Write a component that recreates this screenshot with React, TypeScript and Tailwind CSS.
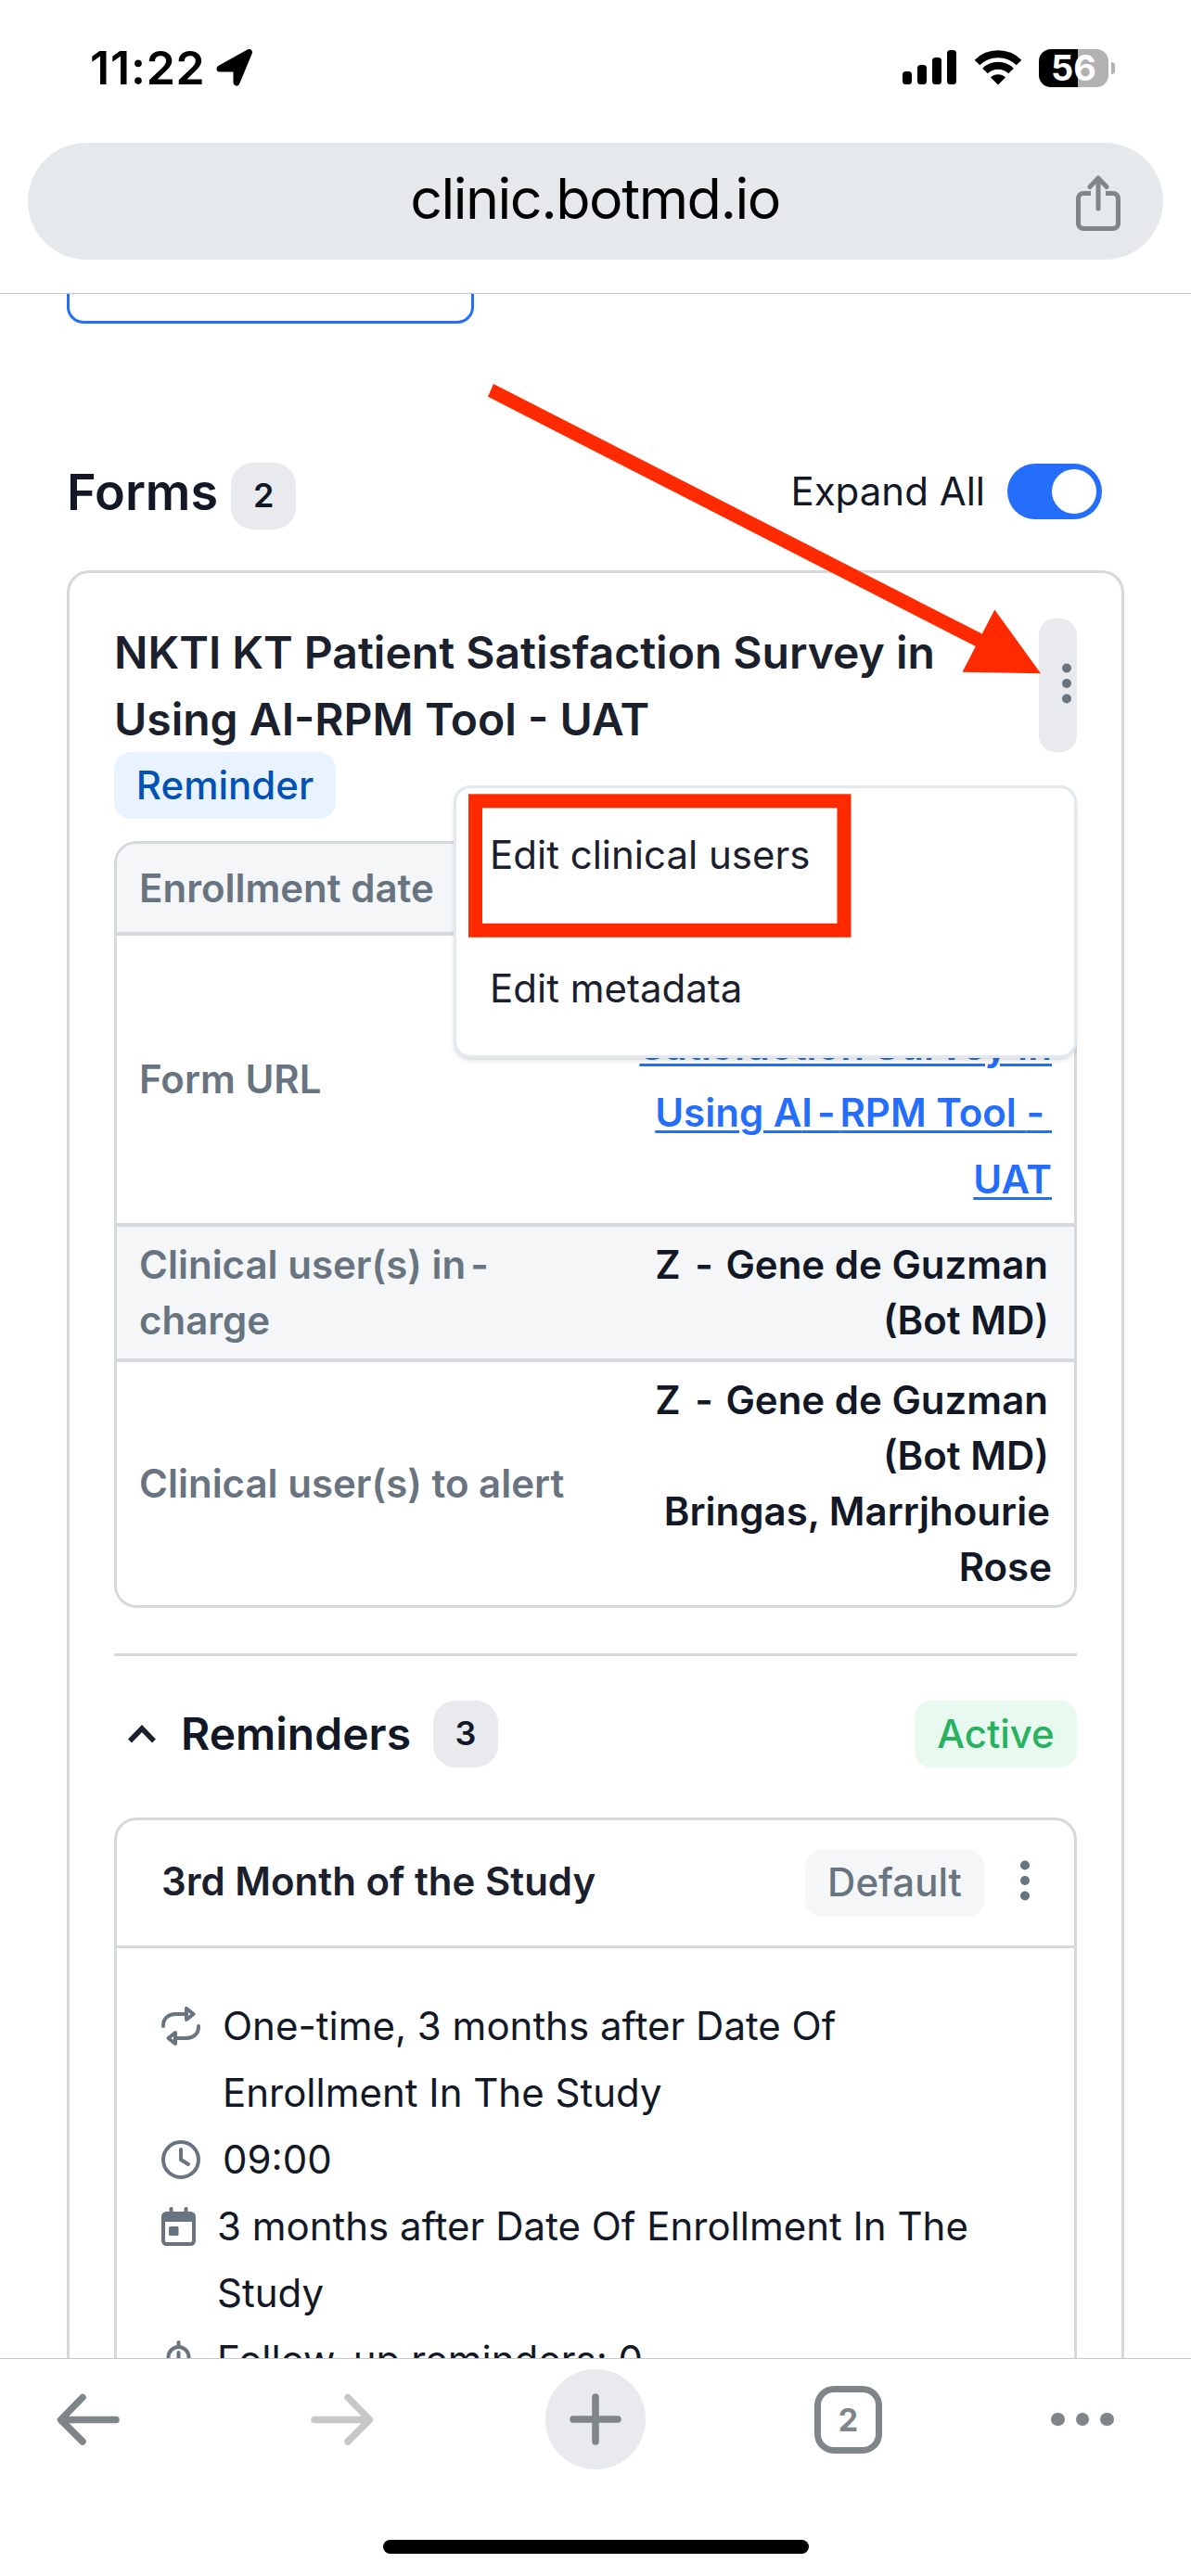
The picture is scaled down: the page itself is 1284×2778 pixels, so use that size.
import type { ReactNode } from "react";

interface DetailRow {
  id: string;
  label: ReactNode;
  value: ReactNode;
  rowClass: string;
}

const GuzmanName = () => (
  <>
    <span className="block pr-1">
      Z <span className="mr-[3px] ml-[5px]">-</span> Gene de Guzman
    </span>
    <span className="block pr-[3px]">(Bot MD)</span>
  </>
);

const detailRows: DetailRow[] = [
  { id: "enrollment", label: "Enrollment date", value: "", rowClass: "h-[95px] bg-[#f4f6f8]" },
  {
    id: "url",
    label: "Form URL",
    value: (
      <a className="block leading-[72px] text-[#256dfb] underline decoration-[3px] underline-offset-[4px]">
        <span className="block">NKTI KT Patient</span>
        <span className="block tracking-[0.1px]">Satisfaction Survey in</span>
        {/* hyphens in the link are set a little wider */}
        <span className="block">
          Using A<span className="tracking-[5px]">I-</span>RPM Tool <span className="tracking-[8px]">-</span>
        </span>
        <span className="block">UAT</span>
      </a>
    ),
    rowClass: "h-[314px] border-t-4",
  },
  {
    id: "charge",
    label: (
      <>
        Clinical user(s) in<span className="ml-[5px]">-</span>
        <br />
        charge
      </>
    ),
    value: <GuzmanName />,
    rowClass: "h-[146px] border-t-4 bg-[#f4f6f8]",
  },
  {
    id: "alert",
    label: "Clinical user(s) to alert",
    value: (
      <>
        <GuzmanName />
        <span className="block pr-0.5">Bringas, Marrjhourie</span>
        <span className="block">Rose</span>
      </>
    ),
    rowClass: "h-[266px] border-t-4",
  },
];

const Kebab = () => (
  <svg width="12" height="44" viewBox="0 0 12 44" fill="#687480">
    <circle cx="6" cy="5.5" r="5" />
    <circle cx="6" cy="22" r="5" />
    <circle cx="6" cy="38.5" r="5" />
  </svg>
);

const CountBadge = ({ children }: { children: ReactNode }) => (
  <span className="flex h-[72px] w-[70px] items-center justify-center rounded-3xl bg-[#e8eaed] pb-0.5 text-[36px] font-semibold">
    {children}
  </span>
);

const RepeatIcon = () => (
  <svg width="42" height="42" viewBox="0 0 42 42" fill="none" stroke="#687480" strokeWidth="4" strokeLinecap="round" strokeLinejoin="round">
    <path d="M2 21v-1C2 13 7.500 8 15 8h12" />
    <path d="M27 2v12l7.500-6z" />
    <path d="M40 21v1c0 7-5.500 12-13 12H15" />
    <path d="M15 28v12l-7.500-6z" />
  </svg>
);

const ClockIcon = () => (
  <svg width="42" height="42" viewBox="0 0 42 42" fill="none" stroke="#687480" strokeWidth="4" strokeLinecap="round" strokeLinejoin="round">
    <circle cx="21" cy="21" r="19" />
    <path d="M21 10v11l8 5" />
  </svg>
);

const CalendarIcon = () => (
  <svg width="37" height="42" viewBox="0 0 37 42" fill="none">
    <path d="M10.500 2v6M26.500 2v6" stroke="#687480" strokeWidth="4" strokeLinecap="round" />
    <rect x="2" y="7" width="33" height="33" rx="3.500" stroke="#687480" strokeWidth="4" />
    <path d="M2 7h33v9H2z" fill="#687480" />
    <rect x="8" y="21" width="10.500" height="10" rx="1.500" fill="#687480" />
  </svg>
);

const TimerIcon = () => (
  <svg width="37" height="42" viewBox="0 0 37 42" fill="none" stroke="#687480" strokeWidth="4" strokeLinecap="round">
    <path d="M18.500 2v3M18.500 13v9" />
    <path d="M7.500 18a11 11 0 0 1 22 0v10h-22z" />
  </svg>
);

const scheduleItems = [
  { id: "repeat", icon: <RepeatIcon />, gap: "gap-6", lines: ["One-time, 3 months after Date Of", "Enrollment In The Study"] },
  { id: "time", icon: <ClockIcon />, gap: "gap-6", lines: ["09:00"] },
  { id: "date", icon: <CalendarIcon />, gap: "gap-[23px]", lines: ["3 months after Date Of Enrollment In The", "Study"] },
  { id: "followup", icon: <TimerIcon />, gap: "gap-[23px]", lines: ["Follow-up reminders: 0"] },
];

const StatusBar = () => (
  <div className="flex h-[146px] shrink-0 items-center justify-between pr-[82px] pl-[97px] text-black">
    <div className="flex items-center gap-[11px]">
      <span className="text-[50px] leading-none font-semibold tracking-[0.8px]">11:22</span>
      <svg width="40" height="40" viewBox="0 0 40 40">
        <path d="M35.500 3.500 22 36V21H4z" fill="black" stroke="black" strokeWidth="7" strokeLinejoin="round" />
      </svg>
    </div>
    <div className="flex items-center">
      <svg width="58" height="38" viewBox="0 0 58 38">
        <rect x="0" y="23" width="10" height="14" rx="3.500" />
        <rect x="16" y="16" width="10" height="21" rx="3.500" />
        <rect x="32" y="8" width="10" height="29" rx="3.500" />
        <rect x="48" y="0" width="10" height="37" rx="3.500" />
      </svg>
      <svg className="ml-[19px]" width="52" height="38" viewBox="0 0 52 38">
        <path d="M3.500 13.500a32 32 0 0 1 45 0" fill="none" stroke="black" strokeWidth="8" />
        <path d="M12 22.500a20 20 0 0 1 28 0" fill="none" stroke="black" strokeWidth="8" />
        <path d="M18 29.500a11.500 11.500 0 0 1 16 0L26 37.500z" />
      </svg>
      <div className="ml-[18px] flex items-center gap-[3px]">
        <div className="flex h-[41px] w-[75px] items-center justify-center rounded-[13px] bg-linear-to-r from-black from-56% to-[#b2b2b2] to-56% text-[38px] leading-none font-bold text-white">
          56
        </div>
        <div className="h-[13px] w-1 rounded-r-full bg-[#b2b2b2]" />
      </div>
    </div>
  </div>
);

const ActionMenu = () => (
  <div className="absolute top-[180px] right-0 z-10 flex h-[294px] w-[672px] flex-col rounded-[18px] border-3 border-[#e2e8f0] bg-white pl-9 text-[42px] text-[#1a202c] shadow-md">
    {["Edit clinical users", "Edit metadata"].map((item) => (
      <button key={item} className="h-36 pb-0.5 text-left">
        {item}
      </button>
    ))}
  </div>
);

const BrowserBar = () => (
  <div className="h-[235px] shrink-0 border-t border-[#c8c8c8] bg-white">
    <div className="mt-[11px] flex h-[108px] items-center">
      <svg className="ml-[61px]" width="68" height="56" viewBox="0 0 68 56" fill="none" stroke="#7f868a" strokeWidth="7.500" strokeLinecap="round" strokeLinejoin="round">
        <path d="M64 28.500H5M28 4.500 4.500 28.500 28 52" />
      </svg>
      <svg className="ml-[206px]" width="68" height="56" viewBox="0 0 68 56" fill="none" stroke="#c7c7c7" strokeWidth="7.500" strokeLinecap="round" strokeLinejoin="round">
        <path d="M4 28.500h59M40 4.500l23.500 24L40 52" />
      </svg>
      <div className="ml-[185px] flex size-[108px] items-center justify-center rounded-full bg-[#e8eaed]">
        <svg width="56" height="56" viewBox="0 0 56 56" stroke="#7f868a" strokeWidth="7.500" strokeLinecap="round">
          <path d="M4 28h48M28 4v48" />
        </svg>
      </div>
      <div className="ml-[182px] flex size-[73px] items-center justify-center rounded-[21px] border-7 border-[#7f868a] text-[34px] font-bold text-[#7f868a]">
        2
      </div>
      <div className="ml-[182px] flex gap-3">
        <span className="size-[14.5px] rounded-full bg-[#7f868a]" />
        <span className="size-[14.5px] rounded-full bg-[#7f868a]" />
        <span className="size-[14.5px] rounded-full bg-[#7f868a]" />
      </div>
    </div>
    <div className="mx-auto mt-[76px] h-[15px] w-[459px] rounded-full bg-black" />
  </div>
);

// Red marker drawn over the page: arrow to the kebab and frame round the menu item
const Markup = () => (
  <svg className="pointer-events-none absolute inset-0 z-20" width="1284" height="2778" viewBox="0 0 1284 2778">
    <path d="M532 414 1058.800 683.600 1072.300 657.400 1122 726.200 1037.500 724.800 1051.800 697 526 427.700z" fill="#ff2a00" />
    <rect x="512.500" y="863.800" width="397.500" height="139.500" fill="none" stroke="#ff2a00" strokeWidth="15" />
  </svg>
);

const App = () => {
  return (
    <div className="relative flex h-[2778px] w-[1284px] flex-col overflow-hidden bg-white font-['Inter',sans-serif] text-[#121826]">
      <StatusBar />
      <div className="h-[171px] shrink-0 border-b border-[#c8c8c8] px-[30px] pt-2">
        <div className="flex h-[126px] items-center rounded-full bg-[#e6e9ec] pr-[45px]">
          <span className="ml-[94px] flex-1 pb-[6px] text-center text-[61px] leading-none tracking-[-1.5px] text-black">clinic.botmd.io</span>
          <svg className="mt-[4px]" width="50" height="60" viewBox="0 0 50 60" fill="none" stroke="#7f868a" strokeWidth="5" strokeLinecap="round" strokeLinejoin="round">
            <path d="M17 19.500H9a5.500 5.500 0 0 0-5.500 5.500v27A5.500 5.500 0 0 0 9 57.500h32a5.500 5.500 0 0 0 5.500-5.500V25a5.500 5.500 0 0 0-5.500-5.500h-8" strokeLinecap="butt" />
            <path d="M25 4v32M16 12.500 25 3l9 9.500" />
          </svg>
        </div>
      </div>

      <main className="min-h-0 flex-1 overflow-hidden px-[72px]">
        <div className="h-8 w-[439px] rounded-b-[18px] border-3 border-t-0 border-[#256dfb]" />

        <div className="mt-[145px] flex h-[72px] items-center justify-between pr-6">
          <div className="flex items-center">
            <h1 className="pt-0.5 text-[54px] leading-none font-semibold">Forms</h1>
            <div className="mt-2.5 ml-3.5">
              <CountBadge>2</CountBadge>
            </div>
          </div>
          <div className="flex items-center gap-6">
            <span className="pb-0.5 text-[42px]">Expand All</span>
            <div className="flex h-[60px] w-[102px] items-center justify-end rounded-full bg-[#256dfb] pr-1.5">
              <div className="size-12 rounded-full bg-white" />
            </div>
          </div>
        </div>

        {/* Form card */}
        <section className="mt-[49px] h-[2100px] rounded-3xl border-3 border-[#d5d9de] px-12 pt-[49px]">
          <div className="relative flex h-36 justify-between">
            <h2 className="pt-px text-[48px] leading-[72px] font-semibold whitespace-nowrap text-[#1a202c]">
              NKTI KT Patient Satisfaction Survey in
              <br />
              Using AI-RPM Tool - UAT
            </h2>
            <button className="flex w-[41px] items-center justify-end rounded-[18px] bg-[#e8eaed] pr-[5px] pb-1">
              <Kebab />
            </button>
            <ActionMenu />
          </div>
          <span className="flex h-[72px] w-[239px] items-center justify-center rounded-[18px] bg-[#e9f3ff] pb-0.5 text-[42px] font-medium text-[#0052b4]">
            Reminder
          </span>

          <div className="mt-6 overflow-hidden rounded-3xl border-3 border-[#d5d9de] text-[42px] leading-[60px] font-semibold">
            {detailRows.map((row) => (
              <div key={row.id} className={`flex items-center justify-between border-[#d5d9de] px-6 whitespace-nowrap ${row.rowClass}`}>
                <div className="text-[#687480]">{row.label}</div>
                <div className="text-right">{row.value}</div>
              </div>
            ))}
          </div>

          <hr className="mt-[49px] border-t-3 border-[#d5d9de]" />

          {/* Reminders */}
          <div className="mt-12 flex h-[72px] items-center">
            <svg className="ml-[14px]" width="32" height="22" viewBox="0 0 32 22" fill="none" stroke="#1a202c" strokeWidth="5.500">
              <path d="M3 18.500 16 5l13 13.500" />
            </svg>
            <h3 className="ml-[26px] text-[48px] leading-none font-semibold">Reminders</h3>
            <div className="ml-6">
              <CountBadge>3</CountBadge>
            </div>
            <span className="ml-auto flex h-[72px] w-[175px] items-center justify-center rounded-[18px] bg-[#e8f9f0] pb-0.5 text-[42px] font-medium text-[#28b15f]">
              Active
            </span>
          </div>

          <div className="mt-[54px] h-[700px] rounded-3xl border-3 border-[#d5d9de]">
            <div className="flex h-[138px] items-center border-b-3 border-[#d5d9de] pr-[47px] pb-1 pl-12">
              <h4 className="text-[42px] font-semibold text-[#1a202c]">3rd Month of the Study</h4>
              <span className="mt-1 ml-auto flex h-[72px] w-[193px] items-center justify-center rounded-[18px] bg-[#f4f6f8] pb-0.5 text-[42px] font-medium text-[#687480]">
                Default
              </span>
              <span className="ml-[38px] pb-0.5">
                <Kebab />
              </span>
            </div>
            <div className="px-12 pt-12 text-[42px] leading-[72px] whitespace-nowrap">
              {scheduleItems.map((item) => (
                <div key={item.id} className={`flex ${item.gap}`}>
                  <div className="flex h-[72px] shrink-0 items-center">{item.icon}</div>
                  <div>
                    {item.lines.map((line) => (
                      <div key={line}>{line}</div>
                    ))}
                  </div>
                </div>
              ))}
            </div>
          </div>
        </section>
      </main>

      <BrowserBar />
      <Markup />
    </div>
  );
};

export default App;
